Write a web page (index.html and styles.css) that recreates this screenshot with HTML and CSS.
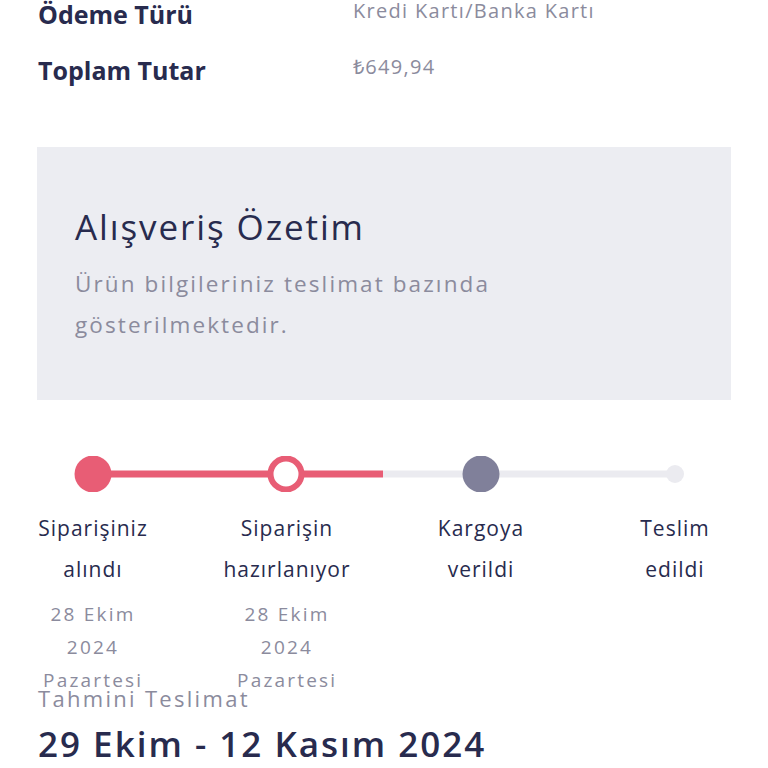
FILE: index.html
```html
<!DOCTYPE html>
<html lang="tr">
<head>
<meta charset="utf-8">
<link rel="stylesheet" href="styles.css">
</head>
<body>
<div class="page">
  <div class="info">
    <div class="info-label">Ödeme Türü</div>
    <div class="info-value">Kredi Kartı/Banka Kartı</div>
    <div class="info-label">Toplam Tutar</div>
    <div class="info-value">₺649,94</div>
  </div>

  <div class="summary">
    <h2 class="summary-title">Alışveriş Özetim</h2>
    <p class="summary-text">Ürün bilgileriniz teslimat bazında gösterilmektedir.</p>
  </div>

  <div class="stepper">
    <svg class="track" width="768" height="36" viewBox="0 0 768 36">
      <line x1="383" y1="18" x2="675" y2="18" stroke="#ebebf0" stroke-width="7"/>
      <line x1="93" y1="18" x2="383" y2="18" stroke="#e85d75" stroke-width="7"/>
      <circle cx="93" cy="18" r="18.5" fill="#e85d75"/>
      <circle cx="286" cy="18" r="15.5" fill="#fff" stroke="#e85d75" stroke-width="6"/>
      <circle cx="481" cy="18" r="18.5" fill="#80809a"/>
      <circle cx="675" cy="18" r="9" fill="#ebebf0"/>
    </svg>
    <div class="steps">
      <div class="step">
        <div class="step-name">Siparişiniz alındı</div>
        <div class="step-date">28 Ekim 2024 Pazartesi</div>
      </div>
      <div class="step">
        <div class="step-name">Siparişin hazırlanıyor</div>
        <div class="step-date">28 Ekim 2024 Pazartesi</div>
      </div>
      <div class="step">
        <div class="step-name">Kargoya verildi</div>
      </div>
      <div class="step">
        <div class="step-name">Teslim edildi</div>
      </div>
    </div>
  </div>

  <div class="estimate">
    <div class="estimate-label">Tahmini Teslimat</div>
    <div class="estimate-date">29 Ekim - 12 Kasım 2024</div>
  </div>
</div>
</body>
</html>
```

FILE: styles.css
```css
html, body {
  margin: 0;
  padding: 0;
  background: #ffffff;
}
body {
  font-family: "Open Sans", "Liberation Sans", sans-serif;
  color: #282b4e;
  width: 768px;
  overflow: hidden;
}
.page {
  display: flex;
  flex-direction: column;
}
.info {
  display: grid;
  grid-template-columns: 315px 1fr;
  row-gap: 26px;
  padding: 0 0 0 38px;
  margin-top: -1px;
}
.info-label {
  font-size: 25px;
  font-weight: 700;
  line-height: 30px;
  color: #282b4e;
}
.info-value {
  margin-top: -1px;
  font-size: 20px;
  line-height: 26px;
  letter-spacing: 1.3px;
  color: #8b8b9d;
}
.summary {
  margin: 62px 37px 0 37px;
  background: #ecedf2;
  height: 253px;
  box-sizing: border-box;
  padding: 56px 38px 0 38px;
}
.summary-title {
  margin: 0;
  font-size: 35px;
  font-weight: 400;
  line-height: 48px;
  letter-spacing: 1.9px;
  color: #282b4e;
}
.summary-text {
  margin: 12px 0 0 0;
  width: 440px;
  font-size: 22.5px;
  line-height: 41px;
  letter-spacing: 2.1px;
  color: #8b8b9d;
}
.stepper {
  margin-top: 56px;
  height: 228px;
}
.track {
  display: block;
}
.steps {
  display: grid;
  grid-template-columns: repeat(4, 194px);
  justify-content: center;
  margin-top: 16px;
}
.step {
  display: flex;
  flex-direction: column;
  align-items: center;
  text-align: center;
}
.step-name {
  font-size: 21px;
  line-height: 41px;
  width: min-content;
  letter-spacing: 1px;
  color: #282b4e;
}
.step-date {
  margin-top: 8px;
  font-size: 19px;
  line-height: 33px;
  width: 100px;
  letter-spacing: 2.2px;
  color: #8b8b9d;
}
.estimate {
  padding-left: 38px;
}
.estimate-label {
  font-size: 22px;
  line-height: 28px;
  letter-spacing: 2.3px;
  color: #8b8b9d;
}
.estimate-date {
  margin-top: 11px;
  font-size: 35px;
  font-weight: 600;
  line-height: 42px;
  letter-spacing: 2px;
  color: #282b4e;
}
```
